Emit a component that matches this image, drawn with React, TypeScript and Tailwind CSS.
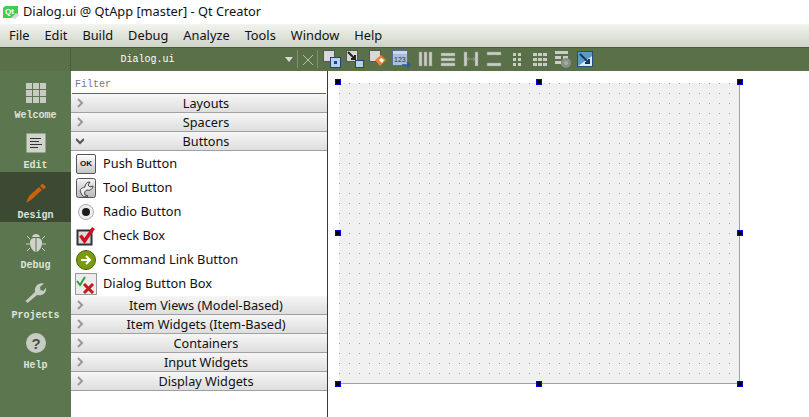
import React from 'react';

const railItems = [
  { label: 'Welcome', icon: <WelcomeIcon /> },
  { label: 'Edit', icon: <EditIcon /> },
  { label: 'Design', icon: <DesignIcon />, active: true },
  { label: 'Debug', icon: <DebugIcon /> },
  { label: 'Projects', icon: <ProjectsIcon /> },
  { label: 'Help', icon: <HelpIcon /> },
];

const menus = ['File', 'Edit', 'Build', 'Debug', 'Analyze', 'Tools', 'Window', 'Help'];

function WelcomeIcon() {
  const cells = [0, 7, 14];
  return (
    <svg width="20" height="20" viewBox="0 0 20 20">
      {cells.map((y) => cells.map((x) => <rect key={`${x}-${y}`} x={x} y={y} width="6" height="6" fill="#c8cbc4" />))}
    </svg>
  );
}

function EditIcon() {
  return (
    <svg width="20" height="20" viewBox="0 0 20 20">
      <rect x="0.5" y="0.5" width="19" height="19" fill="#d0d4cc" />
      <path d="M4 5.500h11M4 8.500h9M4 11.500h12M4 14.500h8" stroke="#333" strokeWidth="1" />
    </svg>
  );
}

function DesignIcon() {
  return (
    <svg width="22" height="20" viewBox="0 0 22 20">
      <path d="M1 20l3-7L14 4l3 3L6 17z" fill="#c8620c" />
      <path d="M15 3l2.500-2.500 3.500 3.500-2.500 2.500z" fill="#c8620c" />
    </svg>
  );
}

function DebugIcon() {
  return (
    <svg width="22" height="20" viewBox="0 0 22 20">
      <path d="M10.500 5C8 5 6.500 5.500 5.500 7c-1 2-.5 6 1 8.500 1 1.500 2.500 3 4 3.500zM11.500 5c2.500 0 4 .5 5 2 1 2 .5 6-1 8.500-1 1.500-2.500 3-4 3.500z" fill="#d0d4cc" />
      <path d="M7 4c1-4 7-4 8 0z" fill="#d0d4cc" />
      <path d="M2 3l3 3M20 3l-3 3M1 11h4M21 11h-4M2 18l3-3M20 18l-3-3" stroke="#c8cdc4" strokeWidth="1" />
    </svg>
  );
}

function ProjectsIcon() {
  return (
    <svg width="22" height="22" viewBox="0 0 22 22">
      <path d="M2.500 21l-2-2L10 10C9 5 13 0 19 1.500L15 5l.5 3 3 1L21 5.500c1 5-3.500 9-9 7.500z" fill="#c8cdc4" />
    </svg>
  );
}

function HelpIcon() {
  return (
    <svg width="20" height="20" viewBox="0 0 20 20">
      <circle cx="10" cy="10" r="10" fill="#c8cdc4" />
      <text x="10" y="15.500" textAnchor="middle" fontSize="15" fontWeight="700" fontFamily="'Liberation Sans', sans-serif" fill="#4a4f48">?</text>
    </svg>
  );
}

function LogoIcon() {
  return (
    <svg width="16" height="13" viewBox="0 0 16 13">
      <path d="M2 0h13v9l-3 3H0V2z" fill="#41cd52" />
      <text x="2" y="8" fontSize="8" fontWeight="700" fontFamily="'Liberation Sans', sans-serif" fill="#fff">Qt</text>
      <path d="M8 12l5-5 3 2-4 4z" fill="#d8d8d8" />
    </svg>
  );
}

function ToolbarIcons() {
  const g = '#c9cdc6';
  const d = '#8c9088';
  return (
    <div className="ml-[2px] flex h-full items-center gap-[5px] pb-[2px]">
      <svg width="18" height="18" viewBox="0 0 18 18">
        <rect x="0.500" y="0.500" width="11" height="11" fill="#d8d8d8" stroke="#555" />
        <rect x="7.500" y="7.500" width="10" height="10" fill="#b8d0f0" stroke="#24427a" />
        <rect x="11" y="11" width="3" height="3" fill="#24427a" />
      </svg>
      <svg width="18" height="18" viewBox="0 0 18 18">
        <rect x="0.500" y="0.500" width="11" height="11" fill="#d8d8d8" stroke="#555" />
        <path d="M2 2l7 7M5 9h4V5" stroke="#222" strokeWidth="2" fill="none" />
        <rect x="9.500" y="10.500" width="8" height="7" fill="#b8d0f0" stroke="#24427a" />
      </svg>
      <svg width="18" height="18" viewBox="0 0 18 18">
        <rect x="0.500" y="0.500" width="11" height="11" fill="#d8d8d8" stroke="#555" />
        <path d="M6 10l6-5 5 5-6 6z" fill="#f08030" />
        <path d="M10 10l2-2 3 2-2 3z" fill="#fff" />
      </svg>
      <svg width="20" height="18" viewBox="0 0 20 18">
        <rect x="0.500" y="0.500" width="15" height="15" fill="#a8c0e0" stroke="#546e96" />
        <rect x="1" y="1" width="14" height="3" fill="#d0d8e4" />
        <text x="2" y="12" fontSize="7" fontFamily="'Liberation Sans', sans-serif" fill="#234">123</text>
        <path d="M10 15h8M15 12l3 3-3 3" stroke="#2a5a9a" strokeWidth="1.500" fill="none" />
      </svg>
      <svg width="16" height="16" viewBox="0 0 16 16">
        <path d="M2 1h3v14H2zM7 1h3v14H7zM12 1h3v14h-3z" fill={g} stroke={d} strokeWidth="0.500" />
      </svg>
      <svg width="18" height="16" viewBox="0 0 18 16" className="ml-[1px]">
        <path d="M2 2h14v3H2zM2 7h14v3H2zM2 12h14v3H2z" fill={g} stroke={d} strokeWidth="0.500" />
      </svg>
      <svg width="18" height="16" viewBox="0 0 18 16">
        <path d="M2 1h3v14H2zM13 1h3v14h-3z" fill={g} stroke={d} strokeWidth="0.500" />
        <path d="M5 8h8M7 6l-2 2 2 2M11 6l2 2-2 2" stroke={d} fill="none" />
      </svg>
      <svg width="18" height="16" viewBox="0 0 18 16">
        <path d="M2 1h14v3H2zM2 12h14v3H2z" fill={g} stroke={d} strokeWidth="0.500" />
        <path d="M9 4v8M7 6l2-2 2 2M7 10l2 2 2-2" stroke="#666" fill="none" />
      </svg>
      <svg width="18" height="16" viewBox="0 0 18 16">
        <path d="M5 2h3v3H5zM10 2h3v3h-3zM5 7h3v3H5zM10 7h3v3h-3zM5 12h3v3H5zM10 12h3v3h-3z" fill={g} />
      </svg>
      <svg width="18" height="16" viewBox="0 0 18 16">
        <path d="M2 2h4v3H2zM7 2h4v3H7zM12 2h4v3h-4zM2 7h4v3H2zM7 7h4v3H7zM12 7h4v3h-4zM2 12h4v3H2zM7 12h4v3H7zM12 12h4v3h-4z" fill={g} />
      </svg>
      <svg width="18" height="18" viewBox="0 0 18 18">
        <path d="M1 1h13v3H1zM1 6h6v3H1zM9 6h5v3H9zM1 11h6v3H1z" fill={g} />
        <circle cx="12" cy="13" r="5" fill="#8c9088" />
        <circle cx="12" cy="13" r="2" fill="#a9ada6" />
      </svg>
      <svg width="16" height="16" viewBox="0 0 16 16">
        <rect x="0.500" y="0.500" width="15" height="15" fill="#5a9ac8" stroke="#1f4f7a" />
        <path d="M1 15L15 5v10z" fill="#dfe8ee" />
        <path d="M3 3l9 9M8 12h4V8" stroke="#123a5e" strokeWidth="2" fill="none" />
      </svg>
    </div>
  );
}

function Category({ title, open = false }: { title: string; open?: boolean }) {
  return (
    <div className="relative h-[19px] border-b border-[#a0a0a0] bg-gradient-to-b from-[#f6f6f6] to-[#dedede] pl-[14px] text-center text-[12.7px] leading-[18px] text-[#111]">
      <svg width="8" height="10" viewBox="0 0 8 10" className="absolute left-[5px] top-[4px]">
        {open ? (
          <path d="M0 3l4 4 4-4" stroke="#555" strokeWidth="2" fill="none" />
        ) : (
          <path d="M2 1l4 4-4 4" stroke="#999" strokeWidth="2" fill="none" />
        )}
      </svg>
      {title}
    </div>
  );
}

function WidgetRow({ label, icon }: { label: string; icon: React.ReactNode }) {
  return (
    <div className="flex h-[24px] items-center text-[12.8px] text-[#111]">
      <div className="mt-[1px] mr-[2px] flex w-[30px] justify-center">{icon}</div>
      <span className="mt-[1px]">{label}</span>
    </div>
  );
}

const widgets = [
  {
    label: 'Push Button',
    icon: (
      <div className="flex h-[20px] w-[20px] items-center justify-center rounded-[2px] border border-[#555] bg-gradient-to-b from-[#fff] to-[#c4c4c4] font-['Liberation_Sans',sans-serif] text-[8px] leading-none font-bold text-[#111]">
        OK
      </div>
    ),
  },
  {
    label: 'Tool Button',
    icon: (
      <svg width="20" height="20" viewBox="0 0 20 20">
        <defs>
          <linearGradient id="toolBg" x1="0" y1="0" x2="0" y2="1">
            <stop offset="0" stopColor="#f4f4f4" />
            <stop offset="1" stopColor="#b8b8b8" />
          </linearGradient>
        </defs>
        <rect x="0.500" y="0.500" width="19" height="19" rx="2" fill="url(#toolBg)" stroke="#555" />
        <path d="M5 15c-2-3 0-5 4-6 0-3 2-5 5-5l-2 3 2 2 3-1c0 3-3 5-6 4-2 1-3 2-2 5l3 1-1 1c-3 0-5-1-6-4z" fill="#eee" stroke="#444" />
      </svg>
    ),
  },
  {
    label: 'Radio Button',
    icon: (
      <svg width="18" height="18" viewBox="0 0 18 18">
        <circle cx="9" cy="9" r="7.500" fill="#eee" stroke="#aaa" />
        <circle cx="9" cy="9" r="4" fill="#1c1c1c" />
      </svg>
    ),
  },
  {
    label: 'Check Box',
    icon: (
      <svg width="20" height="20" viewBox="0 0 20 20">
        <rect x="1.500" y="4.500" width="14" height="14" fill="#ddd" stroke="#333" strokeWidth="2" />
        <path d="M4.500 9.500l4 5.500 9-13" stroke="#d01020" strokeWidth="3.500" fill="none" />
      </svg>
    ),
  },
  {
    label: 'Command Link Button',
    icon: (
      <svg width="20" height="20" viewBox="0 0 20 20">
        <circle cx="10" cy="10" r="9.500" fill="#7a9a10" stroke="#4a6008" />
        <path d="M5 10h9M10 6l4 4-4 4" stroke="#fff" strokeWidth="2" fill="none" />
      </svg>
    ),
  },
  {
    label: 'Dialog Button Box',
    icon: (
      <svg width="22" height="22" viewBox="0 0 22 22">
        <rect x="0.500" y="0.500" width="21" height="21" fill="#ececec" stroke="#999" />
        <path d="M2 8l3 4 5-8" stroke="#2e9e3a" strokeWidth="2" fill="none" />
        <path d="M9 11l9 9M18 11l-9 9" stroke="#c81818" strokeWidth="3" fill="none" />
      </svg>
    ),
  },
];

function Handle({ className }: { className: string }) {
  return <div className={`absolute h-[6px] w-[6px] border border-[#0000e0] bg-black ${className}`} />;
}

export default function App() {
  return (
    <div className="flex h-[417px] w-[809px] flex-col overflow-hidden bg-white font-['Noto_Sans',sans-serif]">
      {/* title bar */}
      <div className="flex h-[24px] items-center bg-white pl-[3px] text-[12.8px] text-[#111]">
        <LogoIcon />
        <span className="ml-[4px]">Dialog.ui @ QtApp [master] - Qt Creator</span>
      </div>

      {/* menu bar */}
      <div className="flex h-[23px] items-center gap-[15px] bg-gradient-to-b from-[#f2f4ee] to-[#cfd4c8] pl-[9px] text-[12.8px] text-[#111]">
        {menus.map((menu) => (
          <span key={menu}>{menu}</span>
        ))}
      </div>

      {/* toolbar */}
      <div className="flex h-[24px] border-t border-[#4a5c3c] bg-[#5a7049]">
        <div className="w-[71px] border-r border-[#4a5c3c]" />
        <div className="relative flex w-[250px] items-center justify-center pr-[97px] font-['Liberation_Mono',monospace] text-[10px] text-white">
          Dialog.ui
          <svg width="8" height="5" viewBox="0 0 8 5" className="absolute left-[214px] top-[9px]">
            <path d="M0 0h8L4 5z" fill="#d8ddd4" />
          </svg>
          <div className="absolute left-[226px] top-[2px] h-[18px] w-px bg-[#7d9070]" />
          <svg width="10" height="10" viewBox="0 0 10 10" className="absolute left-[232px] top-[7px]">
            <path d="M0 0l10 10M10 0L0 10" stroke="#b4bcae" />
          </svg>
          <div className="absolute left-[246px] top-[2px] h-[18px] w-px bg-[#7d9070]" />
        </div>
        <ToolbarIcons />
      </div>

      <div className="flex min-h-0 flex-1">
        {/* mode rail */}
        <div className="flex w-[71px] flex-col bg-[#5c774f] pt-px">
          {railItems.map((item) => (
            <div
              key={item.label}
              className={`flex h-[50px] flex-col items-center justify-start pt-[9px] ${item.active ? 'bg-[#3c4a33]' : ''}`}
            >
              <div className="flex h-[24px] items-center">{item.icon}</div>
              <span className="mt-[6px] font-['Liberation_Mono',monospace] text-[10px] leading-[10px] font-bold text-[#dfe3da]">
                {item.label}
              </span>
            </div>
          ))}
        </div>

        {/* widget box */}
        <div className="flex w-[256px] flex-col pt-[2px]">
          <div className="mx-[1px] flex h-[21px] items-center border-b border-[#5a7049] px-[3px] pt-[2px] font-['Liberation_Mono',monospace] text-[10px] text-[#777]">
            Filter
          </div>
          <Category title="Layouts" />
          <Category title="Spacers" />
          <Category title="Buttons" open />
          {widgets.map((w) => (
            <WidgetRow key={w.label} label={w.label} icon={w.icon} />
          ))}
          <div className="h-px" />
          <Category title="Item Views (Model-Based)" />
          <Category title="Item Widgets (Item-Based)" />
          <Category title="Containers" />
          <Category title="Input Widgets" />
          <Category title="Display Widgets" />
        </div>

        {/* splitter */}
        <div className="w-[1px] bg-[#3a3a3a]" />

        {/* form editor */}
        <div className="flex-1 pt-[12px] pl-[11px]">
          <div className="relative h-[301px] w-[401px] border-r border-b border-[#a0a0a0] bg-[#f0f0f0] bg-[radial-gradient(circle_at_0.5px_0.5px,#a0a0a0_0.8px,transparent_0.8px)] bg-[size:10px_10px]">
            <Handle className="left-[-4px] top-[-4px]" />
            <Handle className="left-[197px] top-[-4px]" />
            <Handle className="left-[398px] top-[-4px]" />
            <Handle className="left-[-4px] top-[147px]" />
            <Handle className="left-[398px] top-[147px]" />
            <Handle className="left-[-4px] top-[298px]" />
            <Handle className="left-[197px] top-[298px]" />
            <Handle className="left-[398px] top-[298px]" />
          </div>
        </div>
      </div>
    </div>
  );
}
